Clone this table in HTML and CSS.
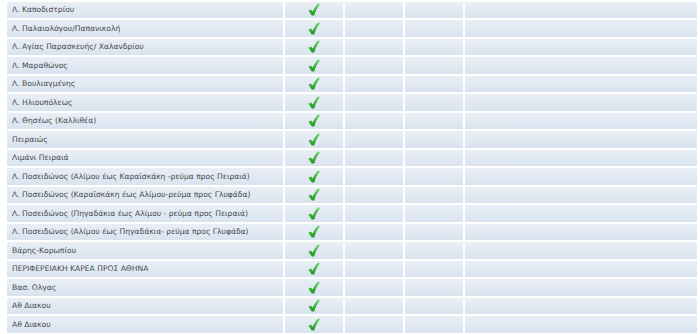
FILE: index.html
```html
<!DOCTYPE html>
<html>
<head>
<meta charset="utf-8">
<link rel="stylesheet" href="styles.css">
</head>
<body>
<svg width="0" height="0" class="defs">
  <defs>
    <linearGradient id="g" x1="0" y1="0" x2="0" y2="1">
      <stop offset="0" stop-color="#72d872"/>
      <stop offset="1" stop-color="#1c961c"/>
    </linearGradient>
    <symbol id="chk" viewBox="0 0 12 13">
      <path d="M0.4 7.8 L3 6.4 L4.7 8.6 C6.3 5 8.3 2 10.4 0.3 L11.8 1.6 C9.6 4.2 7.6 8 6.2 12.6 L3.8 12.6 Z" fill="url(#g)"/>
    </symbol>
  </defs>
</svg>
<table class="grid">
  <colgroup><col class="c1"><col class="c2"><col class="c3"><col class="c4"><col class="c5"></colgroup>
  <tbody>
    <tr><td class="name">Λ. Καποδιστρίου</td><td class="ok"><svg class="check"><use href="#chk"/></svg></td><td></td><td></td><td></td></tr>
    <tr><td class="name">Λ. Παλαιολόγου/Παπανικολή</td><td class="ok"><svg class="check"><use href="#chk"/></svg></td><td></td><td></td><td></td></tr>
    <tr><td class="name">Λ. Αγίας Παρασκευής/ Χαλανδρίου</td><td class="ok"><svg class="check"><use href="#chk"/></svg></td><td></td><td></td><td></td></tr>
    <tr><td class="name">Λ. Μαραθώνος</td><td class="ok"><svg class="check"><use href="#chk"/></svg></td><td></td><td></td><td></td></tr>
    <tr><td class="name">Λ. Βουλιαγμένης</td><td class="ok"><svg class="check"><use href="#chk"/></svg></td><td></td><td></td><td></td></tr>
    <tr><td class="name">Λ. Ηλιουπόλεως</td><td class="ok"><svg class="check"><use href="#chk"/></svg></td><td></td><td></td><td></td></tr>
    <tr><td class="name">Λ. Θησέως (Καλλιθέα)</td><td class="ok"><svg class="check"><use href="#chk"/></svg></td><td></td><td></td><td></td></tr>
    <tr><td class="name">Πειραιώς</td><td class="ok"><svg class="check"><use href="#chk"/></svg></td><td></td><td></td><td></td></tr>
    <tr><td class="name">Λιμάνι Πειραιά</td><td class="ok"><svg class="check"><use href="#chk"/></svg></td><td></td><td></td><td></td></tr>
    <tr><td class="name">Λ. Ποσειδώνος (Αλίμου έως Καραϊσκάκη -ρεύμα προς Πειραιά)</td><td class="ok"><svg class="check"><use href="#chk"/></svg></td><td></td><td></td><td></td></tr>
    <tr><td class="name">Λ. Ποσειδώνος (Καραϊσκάκη έως Αλίμου-ρεύμα προς Γλυφάδα)</td><td class="ok"><svg class="check"><use href="#chk"/></svg></td><td></td><td></td><td></td></tr>
    <tr><td class="name">Λ. Ποσειδώνος (Πηγαδάκια έως Αλίμου - ρεύμα προς Πειραιά)</td><td class="ok"><svg class="check"><use href="#chk"/></svg></td><td></td><td></td><td></td></tr>
    <tr><td class="name">Λ. Ποσειδώνος (Αλίμου έως Πηγαδάκια- ρεύμα προς Γλυφάδα)</td><td class="ok"><svg class="check"><use href="#chk"/></svg></td><td></td><td></td><td></td></tr>
    <tr><td class="name">Βάρης-Κορωπίου</td><td class="ok"><svg class="check"><use href="#chk"/></svg></td><td></td><td></td><td></td></tr>
    <tr><td class="name">ΠΕΡΙΦΕΡΕΙΑΚΗ ΚΑΡΕΑ ΠΡΟΣ ΑΘΗΝΑ</td><td class="ok"><svg class="check"><use href="#chk"/></svg></td><td></td><td></td><td></td></tr>
    <tr><td class="name">Βασ. Ολγας</td><td class="ok"><svg class="check"><use href="#chk"/></svg></td><td></td><td></td><td></td></tr>
    <tr><td class="name">Αθ Διακου</td><td class="ok"><svg class="check"><use href="#chk"/></svg></td><td></td><td></td><td></td></tr>
    <tr><td class="name">Αθ Διακου</td><td class="ok"><svg class="check"><use href="#chk"/></svg></td><td></td><td></td><td></td></tr>
  </tbody>
</table>
</body>
</html>
```
FILE: styles.css
```css
html, body {
  margin: 0;
  padding: 0;
  background: #ffffff;
}
body {
  font-family: "DejaVu Sans", Verdana, sans-serif;
  font-size: 7.6px;
  color: #45494f;
}
.defs {
  position: absolute;
  width: 0;
  height: 0;
}
.grid {
  margin: -0.5px 0 0 5px;
  border-collapse: separate;
  border-spacing: 2px;
  table-layout: fixed;
  width: 694px;
}
.c1 { width: 276px; }
.c2 { width: 58px; }
.c3 { width: 58px; }
.c4 { width: 58px; }
.c5 { width: 232px; }
.grid td {
  height: 16.5px;
  padding: 0;
  background: linear-gradient(#eaeff5, #d9e3ef);
  vertical-align: middle;
  white-space: nowrap;
  overflow: hidden;
}
.grid td.name {
  padding-left: 5px;
}
.grid td.ok {
  text-align: center;
  line-height: 0;
}
.check {
  width: 12px;
  height: 13px;
  display: inline-block;
  margin-left: 0;
}
```
